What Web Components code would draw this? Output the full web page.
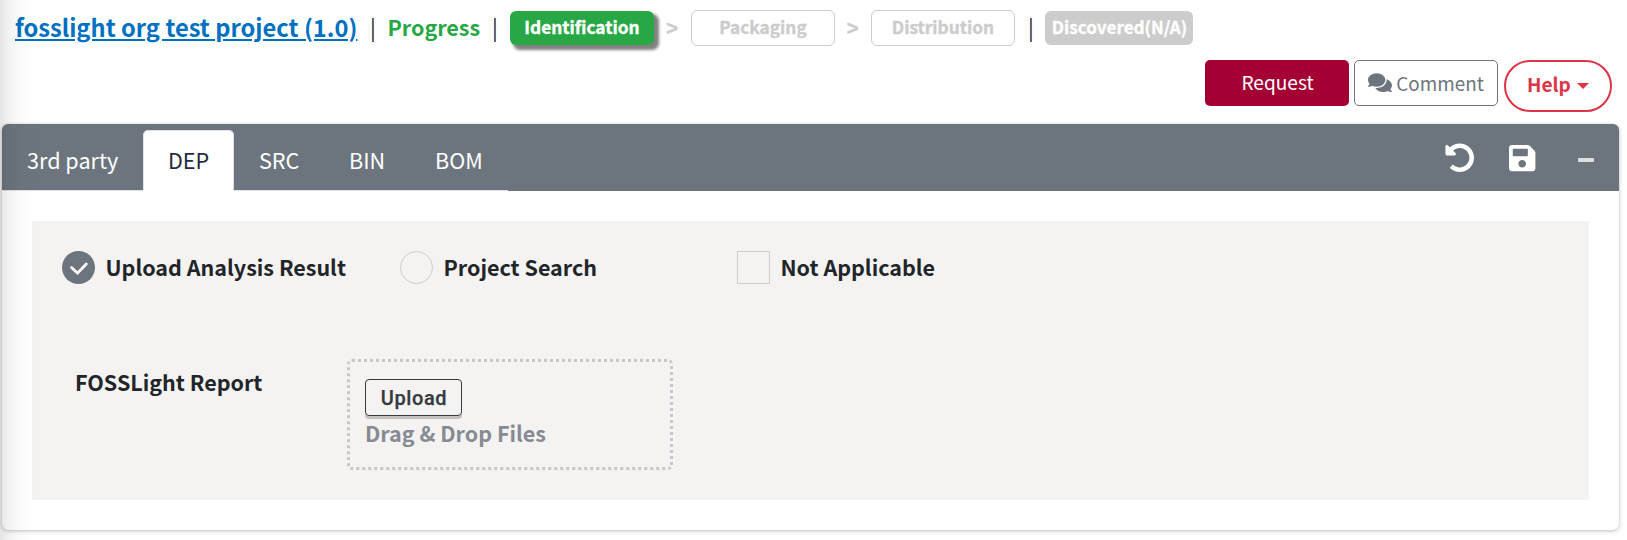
<!DOCTYPE html>
<html lang="en">
<head>
<meta charset="utf-8">
<title>FOSSLight Hub</title>
<style>
html,body{margin:0;height:100%;background:#fff;overflow:hidden}
body{font-family:"Noto Sans CJK KR","Noto Sans CJK SC",sans-serif;color:#212529;font-size:21.5px;line-height:32px}
</style>
</head>
<body>
<fl-page></fl-page>
<script>
const define = (name, css, html) => customElements.define(name, class extends HTMLElement {
  constructor() {
    super();
    this.attachShadow({mode: 'open'}).innerHTML = `<style>*{box-sizing:border-box}${css}</style>${html}`;
  }
});

// Solid icon set
const ICONS = {
  comments: ['0 0 576 512', 'M416 192c0-88.4-93.1-160-208-160S0 103.6 0 192c0 34.3 14.1 65.9 38 92-13.4 30.2-35.5 54.2-35.8 54.5-2.2 2.3-2.8 5.7-1.5 8.7S4.8 352 8 352c36.6 0 66.9-12.3 88.7-25 32.2 15.7 70.3 25 111.3 25 114.9 0 208-71.6 208-160zm122 220c23.9-26 38-57.7 38-92 0-66.9-53.5-124.2-129.3-148.1.9 6.6 1.3 13.3 1.3 20.1 0 105.9-107.7 192-240 192-10.8 0-21.3-.8-31.7-1.9C207.8 439.6 281.8 480 368 480c41 0 79.1-9.2 111.3-25 21.8 12.7 52.1 25 88.7 25 3.2 0 6.1-1.9 7.3-4.8 1.3-2.9.7-6.3-1.5-8.7-.3-.2-22.4-24.2-35.8-54.5z'],
  undo: ['0 0 512 512', 'M255.545 8c-66.269.119-126.438 26.233-170.86 68.685L48.971 40.971C33.851 25.851 8 36.559 8 57.941V192c0 13.255 10.745 24 24 24h134.059c21.382 0 32.09-25.851 16.971-40.971l-41.75-41.75c30.864-28.899 70.801-44.907 113.23-45.273 92.398-.798 170.283 73.977 169.484 169.442C423.236 348.009 349.816 424 256 424c-41.127 0-79.997-14.678-110.63-41.556-4.743-4.161-11.906-3.908-16.368.553L89.34 422.659c-4.872 4.872-4.631 12.815.482 17.433C133.798 479.813 192.074 504 256 504c136.966 0 247.999-111.033 248-247.998C504.001 119.193 392.354 7.755 255.545 8z'],
  save: ['0 0 448 512', 'M433.941 129.941l-83.882-83.882A48 48 0 0 0 316.118 32H48C21.49 32 0 53.49 0 80v352c0 26.51 21.49 48 48 48h352c26.51 0 48-21.49 48-48V163.882a48 48 0 0 0-14.059-33.941zM224 416c-35.346 0-64-28.654-64-64 0-35.346 28.654-64 64-64s64 28.654 64 64c0 35.346-28.654 64-64 64zm96-304.52V212c0 6.627-5.373 12-12 12H76c-6.627 0-12-5.373-12-12V108c0-6.627 5.373-12 12-12h228.52c3.183 0 6.235 1.264 8.485 3.515l3.48 3.48A11.996 11.996 0 0 1 320 111.48z'],
  minus: ['0 0 16 4', 'M1 0h14q1 0 1 1v2q0 1-1 1H1q-1 0-1-1V1q0-1 1-1z'],
  check: ['0 0 33 33', 'M9.5 16.5l6 5.6L24.3 13']
};
customElements.define('fl-icon', class extends HTMLElement {
  constructor() { super(); this.attachShadow({mode: 'open'}); }
  connectedCallback() {
    const name = this.getAttribute('name'), [box, d] = ICONS[name];
    const paint = name === 'check'
      ? 'fill="none" stroke="currentColor" stroke-width="2.8" stroke-linecap="round" stroke-linejoin="miter"'
      : 'fill="currentColor"';
    this.shadowRoot.innerHTML = `<style>:host{display:block;flex:none}svg{display:block;width:100%;height:100%}</style><svg viewBox="${box}"><path ${paint} d="${d}"/></svg>`;
  }
});

define('fl-step', `
:host{display:flex;flex:none;align-items:center;justify-content:center;width:144px;height:36px;padding-bottom:3px;border:1px solid #ccc;border-radius:6px;color:#ccc;font-weight:700;font-size:17.3px;line-height:26px;white-space:nowrap;-webkit-text-stroke:.35px currentColor}
:host([state=active]){height:34px;border:0;background:#28a745;color:#fff;box-shadow:4px 4px 3px 1px gray}
:host([state=off]){width:148px;height:34px;border:0;background:#ccc;color:#fff;font-size:17.1px}
`, `<slot></slot>`);

define('fl-button', `
:host{display:flex;flex:none;align-items:center;justify-content:center;width:144px;height:46px;padding:0 0 2px 1px;border-radius:5px;font-size:19.1px;line-height:28px;white-space:nowrap}
:host([kind=primary]){background:#a50034;color:#fff}
:host([kind=outline]){border:1px solid #6c757d;color:#6c757d;gap:4px;padding:1px 0 1px;font-size:18.9px}
:host([kind=help]){width:108px;height:52px;border:2px solid #dc3545;border-radius:26px;color:#dc3545;font-weight:700;gap:6px;padding:0 0 4px}
.caret{display:none;border:6px solid transparent;border-top-color:currentColor;border-bottom:0;margin-top:3px}
:host([kind=help]) .caret{display:block}
`, `<slot></slot><i class="caret"></i>`);

define('fl-tab', `
:host{display:block;height:61px;padding:0 25px;color:#fff;font-size:21.6px;line-height:60px;border-radius:5px 5px 0 0;white-space:nowrap;border-bottom:1px solid #dee2e6;width:var(--w);flex:none}
:host([active]){background:#fff;color:#1f2d3d;border:1px solid #dee2e6;border-bottom-color:#fff;padding:0 24px;line-height:58px}
:host(:not([active])){border-radius:0}
`, `<slot></slot>`);

define('fl-choice', `
:host{display:flex;flex:none;align-items:center;gap:10.5px;font-weight:700;white-space:nowrap}
.mark{width:33px;height:33px;flex:none;border:1px solid #ccc;border-radius:50%;color:#fff}
:host([shape=box]) .mark{border-radius:0}
:host([checked]) .mark{background:#6c757d;border:0}
fl-icon{display:none;width:33px;height:33px}
:host([checked]) fl-icon{display:block}
.label{padding-bottom:1px}
`, `<div class="mark"><fl-icon name="check"></fl-icon></div><div class="label"><slot></slot></div>`);

define('fl-drop-zone', `
:host{display:block;width:326px;height:111px;border:3px dotted #c4c8cc;border-radius:5px;padding:17px 15px}
.upload{width:97px;height:37px;border:1px solid #343a40;border-radius:4px;box-shadow:0 3px 0 rgba(0,0,0,.2);color:#343a40;font:500 20px/37px Roboto,sans-serif;letter-spacing:.6px;padding-left:1px;text-align:center;-webkit-text-stroke:.25px currentColor}
.hint{margin-top:1px;font-weight:700;color:#868a93;white-space:nowrap}
`, `<div class="upload">Upload</div><div class="hint">Drag &amp; Drop Files</div>`);

define('fl-header', `
:host{display:block;box-sizing:border-box;height:124px;padding-top:10px}
.steps{display:flex;align-items:center;height:36px;padding-left:15px;white-space:nowrap}
a{width:343px;font-size:23.7px;font-weight:700;color:#0070c0;text-decoration:underline;padding-bottom:3px}
i{font-style:normal;width:10px;text-align:center;padding-bottom:3px;margin-left:10px}
b{color:#28a745;width:103px;padding:0 0 3px 9.5px}
s{text-decoration:none;width:36px;padding-right:1px;text-align:center;font:700 20px/26px "Liberation Sans",sans-serif;color:#ccc;-webkit-text-stroke:.4px currentColor}
.actions{display:flex;justify-content:flex-end;align-items:flex-start;margin-top:14px;padding-right:15px}
fl-button+fl-button{margin-left:5px}
fl-button:last-child{margin-left:6px}
fl-icon{width:24px;height:21.4px}
`, `
<div class="steps"><a>fosslight org test project (1.0)</a><i>|</i><b>Progress</b><i style="margin-left:9px">|</i>
<fl-step state="active" style="margin-left:10px">Identification</fl-step><s style="width:37px">&gt;</s><fl-step>Packaging</fl-step><s>&gt;</s><fl-step>Distribution</fl-step><i style="margin-left:11px">|</i><fl-step state="off" style="margin-left:9px;padding-left:1px">Discovered(N/A)</fl-step></div>
<div class="actions"><fl-button kind="primary">Request</fl-button><fl-button kind="outline"><fl-icon name="comments"></fl-icon>Comment</fl-button><fl-button kind="help">Help</fl-button></div>`);

define('fl-card', `
:host{display:block;width:1617px;height:406px;margin-left:2px;border-radius:6px;background:#fff;box-shadow:0 0 1px rgba(0,0,0,.2),0 1px 4px rgba(0,0,0,.24)}
.bar{display:flex;justify-content:space-between;height:67px;background:#6c757d;border-radius:6px 6px 0 0}
.tabs{display:flex;padding-top:6px}
.tools{display:flex;align-items:center;padding:1px 25px 0 0;color:#fff}
.undo{width:29.5px;height:29.5px;margin-right:35px}
.save{width:26.4px;height:30.2px;margin-right:42.2px}
.minus{width:16px;height:4px;color:#dedfe1;margin-top:4px}
.panel{margin:30px;height:279px;background:#f4f3f2;padding:30px}
.choices{display:flex;height:33px;align-items:center}
.row{display:flex;margin-top:75px;padding-left:13px}
.name{width:272px;padding-top:7px;font-weight:700;white-space:nowrap}
`, `
<div class="bar">
<div class="tabs"><fl-tab style="--w:141px">3rd party</fl-tab><fl-tab active style="--w:91px">DEP</fl-tab><fl-tab style="--w:90px">SRC</fl-tab><fl-tab style="--w:86px">BIN</fl-tab><fl-tab style="--w:98px">BOM</fl-tab></div>
<div class="tools"><fl-icon class="undo" name="undo"></fl-icon><fl-icon class="save" name="save"></fl-icon><fl-icon class="minus" name="minus"></fl-icon></div>
</div>
<div class="panel">
<div class="choices"><fl-choice checked style="width:338px">Upload Analysis Result</fl-choice><fl-choice style="width:337px">Project Search</fl-choice><fl-choice shape="box">Not Applicable</fl-choice></div>
<div class="row"><div class="name">FOSSLight Report</div><fl-drop-zone></fl-drop-zone></div>
</div>`);

// The edge overlay is the shade that the collapsed side menu casts over the page
define('fl-page', `
:host{display:block;position:relative;height:540px;overflow:hidden}
.edge{position:absolute;inset:0 auto 0 0;width:40px;pointer-events:none;background:linear-gradient(90deg,rgba(0,0,0,.1),rgba(0,0,0,.055) 8px,rgba(0,0,0,.02) 18px,rgba(0,0,0,.006) 29px,transparent)}
`, `<fl-header></fl-header><fl-card></fl-card><div class="edge"></div>`);
</script>
</body>
</html>
